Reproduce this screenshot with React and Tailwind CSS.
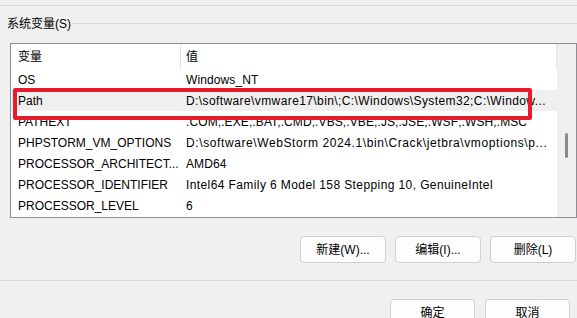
export default function App() {
  const rows = [
    { name: "OS", value: "Windows_NT", tight: true },
    { name: "Path", value: "D:\\software\\vmware17\\bin\\;C:\\Windows\\System32;C:\\Window...", selected: true },
    { name: "PATHEXT", value: ".COM;.EXE;.BAT;.CMD;.VBS;.VBE;.JS;.JSE;.WSF;.WSH;.MSC", tight: true },
    { name: "PHPSTORM_VM_OPTIONS", value: "D:\\software\\WebStorm 2024.1\\bin\\Crack\\jetbra\\vmoptions\\p...", wide: true },
    { name: "PROCESSOR_ARCHITECT...", value: "AMD64", tight: true },
    { name: "PROCESSOR_IDENTIFIER", value: "Intel64 Family 6 Model 158 Stepping 10, GenuineIntel" },
    { name: "PROCESSOR_LEVEL", value: "6" },
  ];

  const btn =
    "flex h-[27px] items-center justify-center rounded-[4px] border border-[#d0d0d0] bg-[#fdfdfd] text-[12px] text-black";

  return (
    <div className="relative h-[318px] w-[577px] overflow-hidden bg-[#f0f0f0] font-['Liberation_Sans','Noto_Sans_CJK_SC',sans-serif] text-[12px] text-black">
      {/* top separator */}
      <div className="mt-[5px] h-px bg-[#dadada]" />

      {/* group title */}
      <div className="mt-[11px] flex h-[14px] items-center">
        <span className="pl-[7px] pr-[2px] leading-none">系统变量(S)</span>
        <div className="mt-[-1px] h-px flex-1 bg-[#dadada]" />
      </div>

      {/* list view */}
      <div className="relative ml-[10px] mt-[12px] flex h-[175px] w-[567px] border border-[#8e8f94] bg-white">
        <div className="w-[546px]">
          <div className="flex h-[25px] items-center">
            <div className="w-[169px] pl-[7px]">变量</div>
            <div className="h-full w-px bg-[#e5e5e5]" />
            <div className="flex-1 pl-[5px]">值</div>
            <div className="h-full w-px bg-[#e5e5e5]" />
          </div>
          {rows.map((r) => (
            <div
              key={r.name}
              className={`flex h-[21px] items-center ${r.selected ? "bg-[#efefef]" : ""}`}
            >
              <div className="w-[169px] overflow-hidden whitespace-nowrap pl-[7px]">{r.name}</div>
              <div className="w-px" />
              <div
                className={`flex-1 overflow-hidden whitespace-nowrap pl-[5px] ${
                  r.tight ? "tracking-[0.1px]" : r.wide ? "tracking-[0.6px]" : "tracking-[0.4px]"
                }`}
              >
                {r.value}
              </div>
            </div>
          ))}
        </div>
        {/* scrollbar */}
        <div className="flex flex-1 justify-center bg-[#f0f0f0] pt-[89px]">
          <div className="ml-[-1px] h-[25px] w-[3px] rounded-full bg-[#8a8a8a]" />
        </div>

        {/* red annotation box */}
        <div className="absolute left-[2px] top-[44px] h-[32px] w-[519px] rounded-[2px] border-4 border-[#e81b2a]" />
      </div>

      {/* action buttons */}
      <div className="mt-[18px] flex justify-end gap-[9px] pr-px">
        <button className={`${btn} w-[86px]`}>新建(W)...</button>
        <button className={`${btn} w-[86px]`}>编辑(I)...</button>
        <button className={`${btn} w-[86px]`}>删除(L)</button>
      </div>

      {/* separator */}
      <div className="mt-[17px] h-px bg-[#d9d9d9]" />

      {/* dialog buttons */}
      <div className="mt-[18px] flex justify-end gap-[10px] pr-[7px]">
        <button className={`${btn} w-[85px]`}>确定</button>
        <button className={`${btn} w-[85px]`}>取消</button>
      </div>
    </div>
  );
}
